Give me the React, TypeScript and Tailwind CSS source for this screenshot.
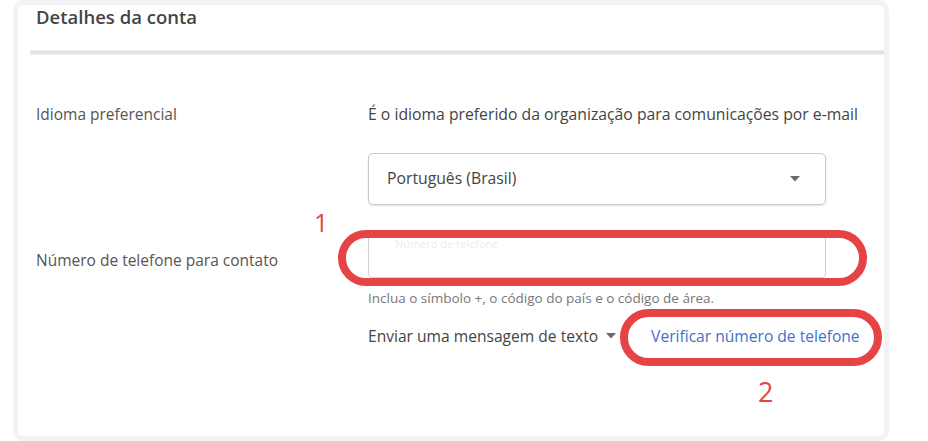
const Caret = ({ className = "" }: { className?: string }) => (
  <svg width="10" height="6" viewBox="0 0 10 6" className={className}>
    <path d="M0 0h10L5 5.5z" fill="#6b6b6b" />
  </svg>
);

export default function App() {
  return (
    <div
      className="min-h-[441px] w-[928px] bg-white"
      style={{ fontFamily: "'Open Sans', Roboto, sans-serif" }}
    >
      <div className="ml-[13px] h-[441px] w-[876px] rounded-[10px] border-[5px] border-[#f3f3f3] bg-white">
        {/* header */}
        <div className="h-[45px] px-[18px]">
          <h2 className="text-[18.5px] leading-[24px] font-semibold text-[#454545]">
            Detalhes da conta
          </h2>
        </div>
        <div className="ml-[12px] h-[5px] bg-gradient-to-b from-[#f0f0f0] via-[#e0e0e0] to-[#f0f0f0]" />

        {/* body */}
        <div className="grid grid-cols-[332px_1fr] pl-[18px] pt-[49px]">
          {/* idioma */}
          <div className="text-[15.5px] leading-[20px] text-[#555]">Idioma preferencial</div>
          <div>
            <p className="text-[15.75px] leading-[20px] text-[#444]">
              É o idioma preferido da organização para comunicações por e-mail
            </p>
            <div className="mt-[29px] flex h-[52px] w-[458px] items-center justify-between rounded-[5px] border border-[#c9c9c9] pl-[18px] pr-[25px] shadow-[0_1px_2px_rgba(0,0,0,0.12)]">
              <span className="text-[15.75px] text-[#444]">Português (Brasil)</span>
              <Caret />
            </div>
          </div>

          {/* telefone */}
          <div className="mt-[45px] text-[15.5px] leading-[20px] text-[#555]">
            Número de telefone para contato
          </div>
          <div className="mt-[27px]">
            <div className="relative h-[46px] w-[458px] rounded-[4px] border border-[#d0d0d0]">
              <span className="absolute left-[26px] top-[3px] text-[11px] text-[#ececec]">
                Número de telefone
              </span>
              <div className="absolute -left-[31px] -right-[42px] -top-[3px] -bottom-[9px] rounded-full border-[8px] border-[#e64345]" />
              <span className="absolute -left-[55px] -top-[23px] text-[25px] leading-[24px] text-[#e64345]">
                1
              </span>
            </div>
            <p className="mt-[12px] text-[13.5px] leading-[16px] text-[#777]">
              Inclua o símbolo +, o código do país e o código de área.
            </p>
            <div className="mt-[20px] flex items-center text-[15.6px] leading-[20px]">
              <span className="text-[#444]">Enviar uma mensagem de texto</span>
              <Caret className="ml-[8px]" />
              <span className="relative ml-[35px] font-medium text-[#3f72c9]">
                Verificar número de telefone
                <span className="absolute -left-[31px] -right-[22px] -top-[17px] -bottom-[20px] rounded-full border-[8px] border-[#e64345]" />
                <span className="absolute left-[107px] top-[54px] text-[27px] leading-[24px] font-normal text-[#e64345]">
                  2
                </span>
              </span>
            </div>
          </div>
        </div>
      </div>
    </div>
  );
}
